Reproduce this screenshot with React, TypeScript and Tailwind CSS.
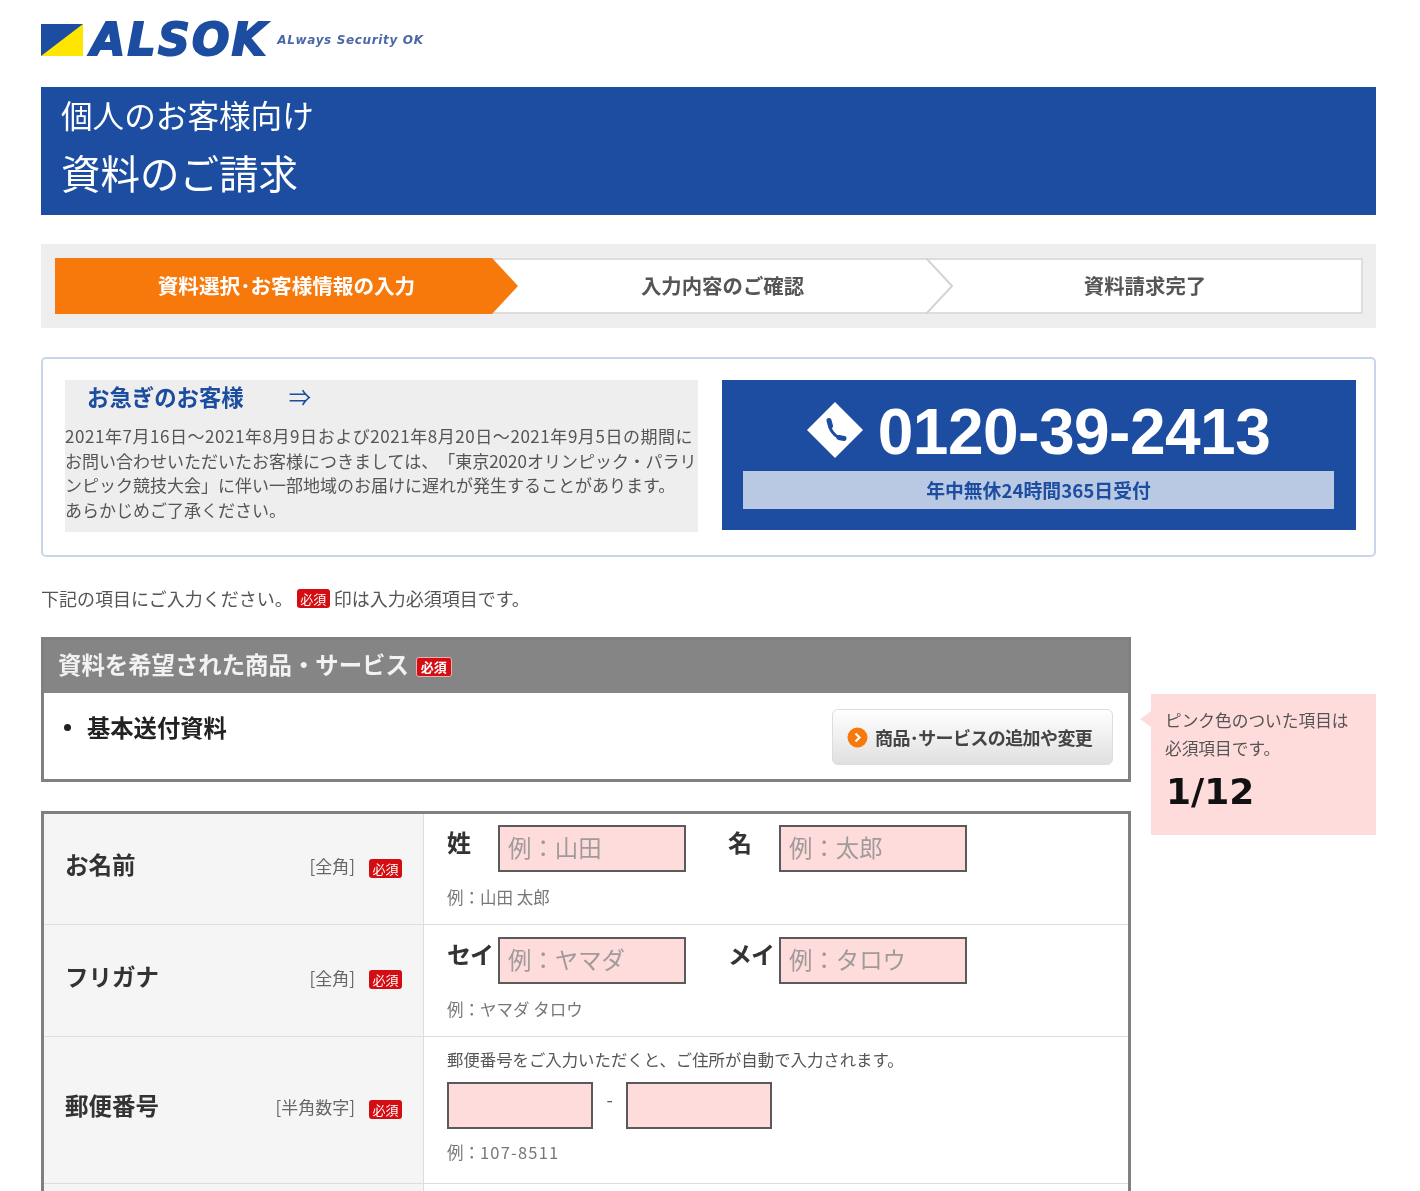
import React from "react";

function Req({ big = false }: { big?: boolean }) {
  return (
    <span
      className={
        big
          ? "inline-flex h-[20px] w-[36px] shrink-0 items-center justify-center rounded-[3px] border border-[#e8b0b0] bg-[#d40d12] text-[13px] leading-none text-white"
          : "inline-flex h-[19px] w-[33px] shrink-0 items-center justify-center rounded-[3px] bg-[#d40d12] text-[13px] leading-none text-white"
      }
    >
      必須
    </span>
  );
}

function Field({ w, h = "h-[47px]", placeholder }: { w: string; h?: string; placeholder?: string }) {
  return (
    <input
      readOnly
      placeholder={placeholder}
      className={`${w} ${h} shrink-0 border-2 border-[#5a5a5a] bg-[#ffdcdc] px-2 pb-[3px] text-[23.4px] leading-none outline-none placeholder:text-[#a09a9a]`}
    />
  );
}

function RowHead({ label, note }: { label: string; note: string }) {
  return (
    <div className="flex items-center border-r border-[#dddddd] bg-[#f5f5f5] pl-[21px] pr-[21px]">
      <span className="mb-[8px] text-[23.5px] font-bold text-[#333]">{label}</span>
      <span className="mb-[6px] ml-auto text-[17px] text-[#666]">{note}</span>
      <span className="mb-[2px] ml-[14px] flex"><Req /></span>
    </div>
  );
}

function NameRow({ label, a, b, pa, pb, ex, rowClass, padClass }: { label: string; a: string; b: string; pa: string; pb: string; ex: string; rowClass: string; padClass: string }) {
  return (
    <div className={`grid grid-cols-[380px_1fr] border-b border-[#dddddd] ${rowClass}`}>
      <RowHead label={label} note="[全角]" />
      <div className={`pl-[23px] ${padClass}`}>
        <div className="flex">
          <span className="w-[51px] text-[24px] leading-[34px] font-bold tracking-[-1px] text-[#333]">{a}</span>
          <Field w="w-[188px]" placeholder={pa} />
          <span className="ml-[42px] w-[51px] text-[24px] leading-[34px] font-bold tracking-[-1px] text-[#333]">{b}</span>
          <Field w="w-[188px]" placeholder={pb} />
        </div>
        <p className="mt-[13px] text-[16.5px] leading-[24px] text-[#777]">{ex}</p>
      </div>
    </div>
  );
}

export default function App() {
  return (
    <div className="h-[1191px] overflow-hidden bg-white blur-[0.5px] font-['Noto_Sans_CJK_JP','Noto_Sans',sans-serif] [text-spacing-trim:space-all]">
      <div className="ml-[41px] w-[1335px] pt-[24px]">
        {/* Logo */}
        <div className="flex h-[32px] items-center">
          <svg width="42" height="32" viewBox="0 0 42 32" className="shrink-0">
            <rect width="42" height="32" fill="#1c4da0" />
            <polygon points="42,0 42,32 0,32" fill="#ffe600" />
          </svg>
          <span className="ml-[8px] font-['DejaVu_Sans',sans-serif] text-[44px] leading-[32px] font-bold italic tracking-[2.4px] text-[#1c4da0] [-webkit-text-stroke:2px_#1c4da0]">ALSOK</span>
          <span className="ml-[9px] font-['DejaVu_Sans',sans-serif] text-[12px] font-bold italic tracking-[0.65px] text-[#4a68a6]">ALways Security OK</span>
        </div>

        {/* Title */}
        <header className="mt-[31px] h-[128px] bg-[#1c4da0] pl-[20px] pt-[4px] text-white">
          <h2 className="text-[31.6px] leading-[46px] font-normal">個人のお客様向け</h2>
          <h1 className="mt-[6px] text-[39.5px] leading-[58px] font-normal">資料のご請求</h1>
        </header>

        {/* Steps */}
        <div className="mt-[29px] h-[84px] bg-[#eeeeee] pl-[14px] pr-[13px] pt-[14px]">
          <div className="flex h-[56px] bg-white outline-2 -outline-offset-2 outline-[#dddddd]">
            <div className="z-10 flex h-full w-[463px] shrink-0 items-center justify-center bg-[#f7790c] pb-[2px] text-[20.6px] font-bold text-white [clip-path:polygon(0_0,437px_0,100%_50%,437px_100%,0_100%)]">
              資料選択･お客様情報の入力
            </div>
            <div className="relative ml-[-26px] flex h-full w-[461px] shrink-0 items-center justify-center pb-[2px] text-[20.4px] font-bold text-[#555]">
              入力内容のご確認
              <svg width="28" height="56" viewBox="0 0 28 56" className="absolute right-0 top-0">
                <polyline points="1,0 27,28 1,56" fill="none" stroke="#d4d4d4" strokeWidth="2" />
              </svg>
            </div>
            <div className="ml-[-26px] flex h-full flex-1 items-center justify-center pb-[2px] text-[20.4px] font-bold text-[#555]">資料請求完了</div>
          </div>
        </div>

        {/* Notice */}
        <section className="mt-[29px] flex h-[200px] rounded-[5px] border-2 border-[#c9d6ea] pl-[22px] pt-[21px]">
          <div className="h-[152px] w-[633px] shrink-0 bg-[#eeeeee]">
            <h3 className="flex h-[34px] items-center pl-[22px] text-[22.4px] font-bold text-[#1c4da0]">
              お急ぎのお客様
              <span className="ml-[45px] font-normal">⇒</span>
            </h3>
            <p className="mt-[10px] whitespace-nowrap text-[17px] leading-[24.6px] text-[#555]">
              <span className="tracking-[0.55px]">2021年7月16日～2021年8月9日および2021年8月20日～2021年9月5日の期間に</span><br />
              お問い合わせいただいたお客様につきましては、「東京2020オリンピック・パラリ<br />
              ンピック競技大会」に伴い一部地域のお届けに遅れが発生することがあります。<br />
              あらかじめご了承ください。
            </p>
          </div>
          <div className="ml-[24px] h-[150px] w-[634px] shrink-0 bg-[#1c4da0] pl-[21px] pr-[22px]">
            <div className="flex h-[91px] items-center justify-center pt-[10px]">
              <svg width="56" height="56" viewBox="0 0 56 56" className="mb-[2px] shrink-0">
                <polygon points="28,0 56,28 28,56 0,28" fill="#fff" />
                <path d="M22.5 20 C21.5 27 28 36 36 36.5" fill="none" stroke="#1c4da0" strokeWidth="3" strokeLinecap="round" />
                <path d="M22 18.5 L23.5 24" fill="none" stroke="#1c4da0" strokeWidth="5" strokeLinecap="round" />
                <path d="M32 35.5 L37 36.5" fill="none" stroke="#1c4da0" strokeWidth="5" strokeLinecap="round" />
              </svg>
              <span className="ml-[15px] mt-[2px] font-['Liberation_Sans',sans-serif] text-[64px] leading-none font-bold tracking-[-0.5px] text-white">0120-39-2413</span>
            </div>
            <div className="flex h-[38px] items-center justify-center bg-[#b9c9e3] text-[18.8px] font-bold text-[#1c4da0]">年中無休24時間365日受付</div>
          </div>
        </section>

        <p className="mt-[28px] flex h-[26px] items-center text-[18px] text-[#555]">
          下記の項目にご入力ください。
          <span className="ml-[4px] mr-[4px] flex"><Req /></span>
          印は入力必須項目です。
        </p>

        {/* Main */}
        <div className="mt-[26px] flex items-start gap-[20px]">
          <div className="w-[1090px] shrink-0">
            <section className="h-[145px] border-[3px] border-[#808080]">
              <h3 className="flex h-[53px] items-center bg-[#858585] pb-[3px] pl-[14px] text-[23.4px] font-bold text-[#f2f2f2]">
                資料を希望された商品・サービス
                <span className="ml-[7px] mt-[3px] flex"><Req big /></span>
              </h3>
              <div className="flex justify-between pl-[20px] pr-[15px] pt-[16px]">
                <div className="flex h-[36px] items-center">
                  <span className="h-[7px] w-[7px] rounded-full bg-[#222]" />
                  <span className="ml-[16px] text-[23.3px] leading-[36px] font-bold text-[#222]">基本送付資料</span>
                </div>
                <button className="flex h-[56px] w-[281px] items-center rounded-[6px] border border-[#dddddd] bg-gradient-to-b from-white to-[#e0e0e0] pl-[14px] text-[18px] font-bold tracking-[-0.6px] text-[#444]">
                  <svg width="21" height="21" viewBox="0 0 21 21" className="mr-[7px] shrink-0">
                    <circle cx="10.5" cy="10.5" r="10" fill="#f7790c" />
                    <polyline points="8.5,6.5 12.5,10.5 8.5,14.5" fill="none" stroke="#fff" strokeWidth="2.2" />
                  </svg>
                  商品･サービスの追加や変更
                </button>
              </div>
            </section>

            <section className="mt-[29px] h-[400px] border-[3px] border-[#808080]">
              <NameRow rowClass="h-[111px]" padClass="pt-[11px]" label="お名前" a="姓" b="名" pa="例：山田" pb="例：太郎" ex="例：山田 太郎" />
              <NameRow rowClass="h-[112px]" padClass="pt-[12px]" label="フリガナ" a="セイ" b="メイ" pa="例：ヤマダ" pb="例：タロウ" ex="例：ヤマダ タロウ" />
              <div className="grid h-[147px] grid-cols-[380px_1fr] border-b border-[#dddddd]">
                <RowHead label="郵便番号" note="[半角数字]" />
                <div className="pl-[23px] pt-[9px]">
                  <p className="text-[16.4px] leading-[26px] text-[#555]">郵便番号をご入力いただくと、ご住所が自動で入力されます。</p>
                  <div className="mt-[10px] flex items-center">
                    <Field w="w-[146px]" />
                    <span className="w-[33px] pb-[12px] text-center text-[18px] text-[#555]">-</span>
                    <Field w="w-[146px]" />
                  </div>
                  <p className="mt-[11px] text-[16.5px] leading-[24px] text-[#777]">例：<span className="tracking-[1.2px]">107-8511</span></p>
                </div>
              </div>
              <div className="grid h-[100px] grid-cols-[380px_1fr]">
                <div className="border-r border-[#dddddd] bg-[#f5f5f5]" />
                <div />
              </div>
            </section>
          </div>

          {/* Side note */}
          <aside className="relative mt-[57px] h-[141px] w-[225px] shrink-0 bg-[#ffdcdc] pl-[14px] pt-[12px]">
            <span className="absolute left-[-11px] top-[17px] h-0 w-0 border-y-[8px] border-r-[11px] border-y-transparent border-r-[#ffdcdc]" />
            <p className="text-[16.7px] leading-[28px] text-[#555]">ピンク色のついた項目は<br />必須項目です。</p>
            <p className="mt-[8px] pl-[1px] font-['DejaVu_Sans',sans-serif] text-[36px] leading-[44px] font-bold text-[#111]">1/12</p>
          </aside>
        </div>
      </div>
    </div>
  );
}
